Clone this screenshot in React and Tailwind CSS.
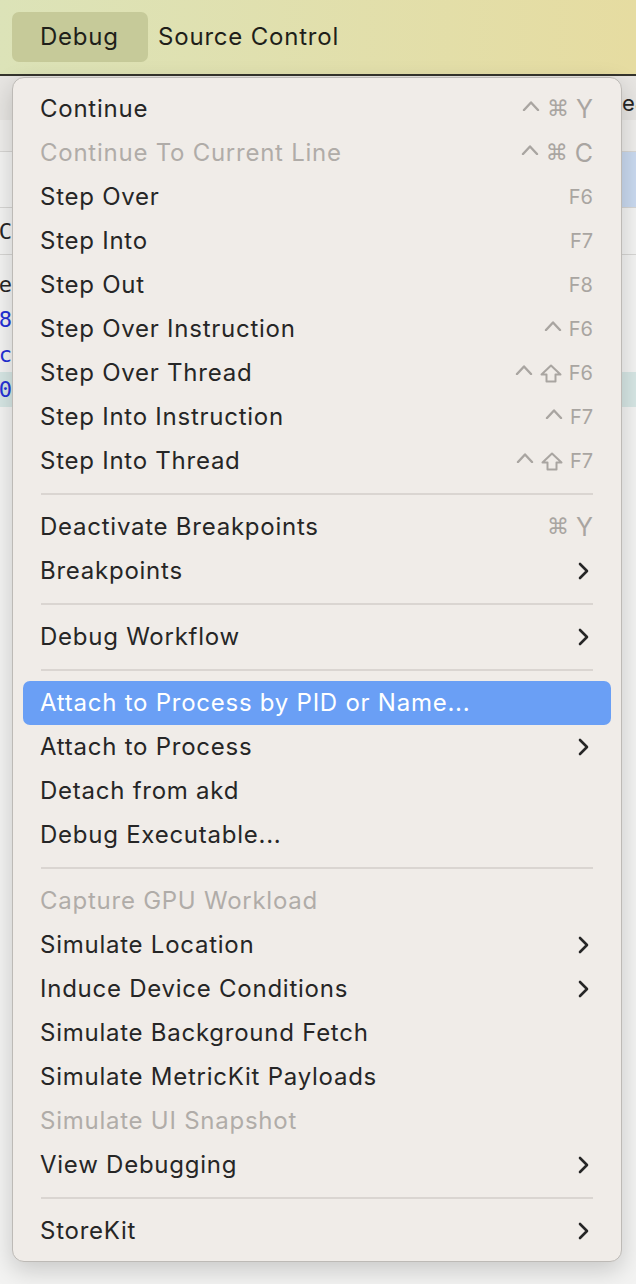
import React from 'react';

const FONT = { fontFamily: 'Inter, "Noto Sans", "Liberation Sans", sans-serif' };

const Caret = ({ className = '' }) => (
  <svg width="18" height="11" viewBox="0 0 18 11" className={className} fill="none">
    <polyline points="2,10 9,2.5 16,10" stroke="currentColor" strokeWidth="2.4" strokeLinecap="round" strokeLinejoin="round" />
  </svg>
);

const Shift = () => (
  <svg width="22" height="19" viewBox="0 0 22 19" fill="none">
    <path d="M11 1.5 L20.5 10.5 H15.5 V17.5 H6.5 V10.5 H1.5 Z" stroke="currentColor" strokeWidth="2" strokeLinejoin="round" />
  </svg>
);

const Chevron = () => (
  <svg width="11" height="18" viewBox="0 0 11 18" fill="none" className="mr-[4px]">
    <polyline points="2,2 9,9 2,16" stroke="#262626" strokeWidth="2.6" strokeLinecap="round" strokeLinejoin="round" />
  </svg>
);

const Keys = ({ keys }) => (
  <div className="flex items-center gap-[7px] text-[#a9a5a1]">
    {keys.map((k, i) => {
      if (k === 'ctrl') return <Caret key={i} className="mb-[8px]" />;
      if (k === 'shift') return <Shift key={i} />;
      if (k === 'cmd')
        return (
          <span key={i} className="text-[22px] leading-none" style={{ fontFamily: '"DejaVu Sans", sans-serif' }}>
            ⌘
          </span>
        );
      const fkey = k.startsWith('F');
      return (
        <span key={i} className={fkey ? 'text-[20px] leading-none' : 'text-[25px] leading-none'}>
          {k}
        </span>
      );
    })}
  </div>
);

const groups = [
  [
    { label: 'Continue', keys: ['ctrl', 'cmd', 'Y'] },
    { label: 'Continue To Current Line', keys: ['ctrl', 'cmd', 'C'], disabled: true },
    { label: 'Step Over', keys: ['F6'] },
    { label: 'Step Into', keys: ['F7'] },
    { label: 'Step Out', keys: ['F8'] },
    { label: 'Step Over Instruction', keys: ['ctrl', 'F6'] },
    { label: 'Step Over Thread', keys: ['ctrl', 'shift', 'F6'] },
    { label: 'Step Into Instruction', keys: ['ctrl', 'F7'] },
    { label: 'Step Into Thread', keys: ['ctrl', 'shift', 'F7'] },
  ],
  [
    { label: 'Deactivate Breakpoints', keys: ['cmd', 'Y'] },
    { label: 'Breakpoints', sub: true },
  ],
  [{ label: 'Debug Workflow', sub: true }],
  [
    { label: 'Attach to Process by PID or Name...', active: true },
    { label: 'Attach to Process', sub: true },
    { label: 'Detach from akd' },
    { label: 'Debug Executable...' },
  ],
  [
    { label: 'Capture GPU Workload', disabled: true },
    { label: 'Simulate Location', sub: true },
    { label: 'Induce Device Conditions', sub: true },
    { label: 'Simulate Background Fetch' },
    { label: 'Simulate MetricKit Payloads' },
    { label: 'Simulate UI Snapshot', disabled: true },
    { label: 'View Debugging', sub: true },
  ],
  [{ label: 'StoreKit', sub: true }],
];

const MenuItem = ({ item }) => (
  <div
    className={`mx-[10px] h-[44px] pl-[17px] pr-[18px] flex items-center justify-between rounded-[7px] ${
      item.active ? 'bg-[#6a9ff5] text-white' : item.disabled ? 'text-[#b0aca8]' : 'text-[#262626]'
    }`}
  >
    <span className="text-[24px] leading-none tracking-[0.75px]">{item.label}</span>
    {item.keys && <Keys keys={item.keys} />}
    {item.sub && <Chevron />}
  </div>
);

const Separator = () => (
  <div className="h-[22px] flex items-center mx-[28px]">
    <div className="h-[2px] w-full bg-[#dad5d1]" />
  </div>
);

const EditorRow = ({ h, left = 'bg-[#f3f3f2]', right = 'bg-[#f3f3f2]', line, lt, rt, ltColor = 'text-[#262626]' }) => (
  <div className={`flex ${line ? 'border-b border-[#d6d5d3]' : ''}`} style={{ height: h }}>
    <div className={`w-[12px] overflow-hidden flex items-center justify-end ${left}`}>
      {lt && (
        <span className={`text-[22px] whitespace-nowrap ${ltColor}`} style={{ fontFamily: '"DejaVu Sans Mono", monospace' }}>
          {lt}
        </span>
      )}
    </div>
    <div className={`flex-1 ${left}`} />
    <div className={`w-[14px] overflow-hidden flex items-end pb-[2px] ${right}`}>
      {rt && <span className="text-[22px] leading-[30px] whitespace-nowrap text-[#262626]">{rt}</span>}
    </div>
  </div>
);

export default function App() {
  return (
    <div className="relative w-[636px] h-[1284px] overflow-hidden bg-[#f3f3f2]" style={FONT}>
      <div className="h-[76px] flex items-center bg-linear-to-r from-[#dce3b8] to-[#e6dca1] border-b-2 border-[#34342c]">
        <div className="ml-[12px] h-[50px] w-[136px] rounded-[7px] bg-[#c6ca99] flex items-center pl-[28px]">
          <span className="text-[24px] tracking-[0.75px] text-[#1f1f1a]">Debug</span>
        </div>
        <span className="ml-[10px] text-[24px] tracking-[0.8px] text-[#1f1f1a]">Source Control</span>
      </div>

      <EditorRow h={44} left="bg-[#e7e5e2]" right="bg-[#e7e5e2]" rt="e8" />
      <EditorRow h={32} left="bg-[#eeedeb]" right="bg-[#eeedeb]" line />
      <EditorRow h={56} right="bg-[#c9d9ef]" line />
      <EditorRow h={47} lt="C" line />
      <EditorRow h={12} />
      <EditorRow h={35} lt="ne" />
      <EditorRow h={35} lt="38" ltColor="text-[#2431d6]" />
      <EditorRow h={35} lt="5c" ltColor="text-[#2431d6]" />
      <EditorRow h={35} left="bg-[#d6e6e4]" right="bg-[#d6e6e4]" lt="70" ltColor="text-[#2431d6]" />

      <div className="absolute left-[12px] top-[77px] w-[610px] rounded-[12px] bg-[#f0ece8] border border-[#bdbab6] shadow-[0_8px_24px_rgba(0,0,0,0.18)] pt-[9px] pb-[8px]">
        {groups.map((g, gi) => (
          <React.Fragment key={gi}>
            {gi > 0 && <Separator />}
            {g.map((item) => (
              <MenuItem key={item.label} item={item} />
            ))}
          </React.Fragment>
        ))}
      </div>
    </div>
  );
}
